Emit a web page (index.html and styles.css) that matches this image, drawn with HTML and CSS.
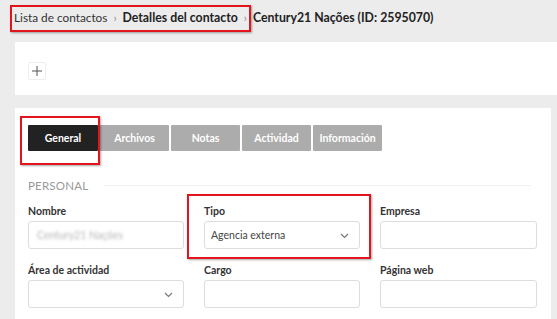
FILE: index.html
```html
<!DOCTYPE html>
<html lang="es">
<head>
<meta charset="utf-8">
<link rel="stylesheet" href="styles.css">
</head>
<body>
<header class="crumbs">
  <span class="crumb">Lista de contactos</span>
  <span class="sep">›</span>
  <span class="crumb strong">Detalles del contacto</span>
  <span class="sep">›</span>
  <span class="crumb strong">Century21 Nações (ID: 2595070)</span>
</header>
<section class="toolbar">
  <button class="add-btn" type="button" aria-label="Añadir">
    <svg width="10" height="10" viewBox="0 0 10 10"><path d="M5 0v10M0 5h10" stroke="#555" stroke-width="1"/></svg>
  </button>
</section>
<main class="card">
  <nav class="tabs">
    <span class="tab active">General</span>
    <span class="tab">Archivos</span>
    <span class="tab">Notas</span>
    <span class="tab">Actividad</span>
    <span class="tab">Información</span>
  </nav>
  <div class="section-head"><span class="section-title">PERSONAL</span><span class="section-line"></span></div>
  <div class="form-grid">
    <div class="field">
      <label class="label">Nombre</label>
      <div class="input"><span class="blurred">Century21 Nações</span></div>
    </div>
    <div class="field">
      <label class="label">Tipo</label>
      <div class="input select"><span class="value">Agencia externa</span>
        <svg class="chev" width="9" height="6" viewBox="0 0 9 6"><path d="M1 1l3.5 3.5L8 1" fill="none" stroke="#777" stroke-width="1.2"/></svg>
      </div>
    </div>
    <div class="field">
      <label class="label">Empresa</label>
      <div class="input"></div>
    </div>
    <div class="field">
      <label class="label">Área de actividad</label>
      <div class="input select"><span class="value"></span>
        <svg class="chev" width="9" height="6" viewBox="0 0 9 6"><path d="M1 1l3.5 3.5L8 1" fill="none" stroke="#777" stroke-width="1.2"/></svg>
      </div>
    </div>
    <div class="field">
      <label class="label">Cargo</label>
      <div class="input"></div>
    </div>
    <div class="field">
      <label class="label">Página web</label>
      <div class="input"></div>
    </div>
  </div>
</main>
<div class="mark mark-crumbs"></div>
<div class="mark mark-tab"></div>
<div class="mark mark-tipo"></div>
</body>
</html>
```

FILE: styles.css
```css
* { box-sizing: border-box; }
html, body { margin: 0; padding: 0; }
body {
  background: #ececec;
  font-family: Lato, "Open Sans", sans-serif;
  color: #333;
  width: 557px;
  height: 319px;
  overflow: hidden;
  position: relative;
}
.crumbs {
  height: 42px;
  padding: 10px 0 0 14px;
  display: flex;
  align-items: baseline;
  font-size: 11.8px;
  white-space: nowrap;
}
.crumb { color: #333; }
.crumb.strong { font-weight: bold; color: #222; font-size: 12.3px; }
.sep { color: #888; font-size: 11px; margin: 0 6px 0 6px; }
.toolbar {
  margin-left: 15px;
  height: 53px;
  background: #fff;
  padding: 20px 0 0 13px;
}
.add-btn {
  width: 18px;
  height: 18px;
  padding: 0;
  border: 1px solid #eee;
  border-radius: 2px;
  background: #fff;
  display: flex;
  align-items: center;
  justify-content: center;
}
.card {
  margin: 13px 6px 0 15px;
  background: #fff;
  padding: 17px 13px 0 13px;
  height: 211px;
}
.tabs { display: flex; gap: 2px; }
.tab {
  width: 69px;
  height: 26px;
  background: #acacac;
  color: #fff;
  font-size: 10.5px;
  font-weight: bold;
  display: flex;
  align-items: center;
  justify-content: center;
  border-radius: 1px;
}
.tab.active { background: #222; width: 70px; }
.section-head {
  margin-top: 26px;
  height: 16px;
  display: flex;
  align-items: center;
}
.section-title { color: #999; font-size: 11.5px; letter-spacing: 0.2px; }
.section-line { flex: 1; height: 1px; background: #f2f2f2; margin: 0 7px 0 16px; }
.form-grid {
  margin-top: 11px;
  display: grid;
  grid-template-columns: 156px 156px 157px;
  column-gap: 20px;
  row-gap: 14px;
}
.label {
  display: block;
  font-size: 10.5px;
  font-weight: bold;
  color: #333;
  line-height: 14px;
  margin-bottom: 3px;
}
.input {
  height: 28px;
  border: 1px solid #ddd;
  border-radius: 3px;
  background: #fff;
  display: flex;
  align-items: center;
  padding: 0 6px;
  font-size: 10.5px;
  color: #444;
}
.select { justify-content: space-between; padding-right: 10px; }
.blurred { color: #b4b4b4; filter: blur(1.4px); padding-left: 2px; font-size: 10.5px; }
.chev { margin-top: 2px; }
.mark {
  position: absolute;
  border: 2px solid #e4141c;
  box-shadow: 1px 1px 2px rgba(0,0,0,0.35);
  pointer-events: none;
}
.mark-crumbs { left: 10px; top: 5px; width: 241px; height: 27px; }
.mark-tab { left: 20px; top: 116px; width: 80px; height: 49px; }
.mark-tipo { left: 187px; top: 194px; width: 184px; height: 65px; }
```
